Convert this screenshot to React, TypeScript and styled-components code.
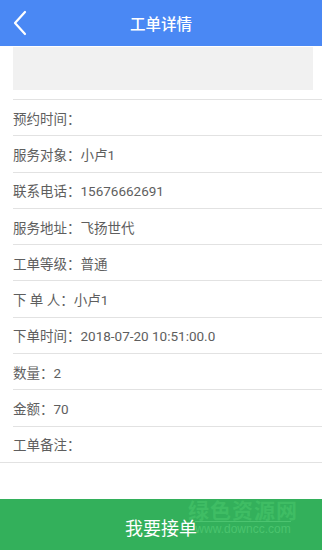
import React from 'react';
import styled, { createGlobalStyle } from 'styled-components';

const GlobalStyle = createGlobalStyle`
  html, body {
    margin: 0;
    padding: 0;
    background: #ffffff;
    font-family: Roboto, "Noto Sans CJK SC", sans-serif;
  }
`;

const Page = styled.div`
  width: 322px;
  height: 550px;
  display: flex;
  flex-direction: column;
  overflow: hidden;
  position: relative;
`;

const Header = styled.header`
  height: 46px;
  background-color: #4a88f4;
  display: flex;
  align-items: center;
  justify-content: center;
  position: relative;
  flex-shrink: 0;
`;

const BackButton = styled.span`
  position: absolute;
  left: 12px;
  top: 10px;
  width: 16px;
  height: 26px;
  display: flex;
`;

const Title = styled.h1`
  margin: 0;
  color: #ffffff;
  font-size: 15.5px;
  font-weight: 500;
  font-family: "Noto Sans CJK SC", sans-serif;
`;

const Body = styled.main`
  flex: 1;
  display: flex;
  flex-direction: column;
`;

const Banner = styled.div`
  height: 43px;
  margin: 1px 9px 0 13px;
  background-color: #f1f1f1;
`;

const List = styled.div`
  margin-top: 9px;
  display: flex;
  flex-direction: column;
  border-top: 1px solid #e2e2e2;
  margin-left: 13px;
`;

const Row = styled.div<{ $full?: boolean }>`
  height: 35.3px;
  display: flex;
  align-items: center;
  border-bottom: 1px solid #e2e2e2;
  margin-left: ${({ $full }) => ($full ? '-13px' : '0')};
  padding-left: ${({ $full }) => ($full ? '13px' : '0')};
  font-size: 13.5px;
  color: #5e5e5e;
  font-family: Roboto, "Noto Sans CJK SC", sans-serif;
`;

const Footer = styled.button`
  height: 51px;
  border: none;
  background-color: #33b05b;
  color: #ffffff;
  font-size: 18px;
  font-family: "Noto Sans CJK SC", sans-serif;
  display: flex;
  align-items: center;
  justify-content: center;
  flex-shrink: 0;
  padding: 0;
  padding-top: 4px;
`;

const Watermark = styled.div`
  position: absolute;
  right: 24px;
  bottom: 14px;
  display: flex;
  flex-direction: column;
  align-items: center;
  pointer-events: none;
  font-family: "Noto Sans CJK SC", sans-serif;
`;

const WatermarkName = styled.span`
  font-size: 21px;
  font-weight: 700;
  letter-spacing: 1px;
  line-height: 24px;
  color: #3fbd64;
`;

const WatermarkUrl = styled.span`
  font-size: 12px;
  line-height: 13px;
  font-family: "Liberation Sans", sans-serif;
  border-top: 1px solid #4cc470;
  padding-top: 1px;
  color: #4ac46e;
`;

const rows = [
  '预约时间：',
  '服务对象：小卢1',
  '联系电话：15676662691',
  '服务地址：飞扬世代',
  '工单等级：普通',
  '下 单 人：小卢1',
  '下单时间：2018-07-20 10:51:00.0',
  '数量：2',
  '金额：70',
  '工单备注：',
];

export default function App() {
  return (
    <>
      <GlobalStyle />
      <Page>
        <Header>
          <BackButton>
            <svg width="16" height="26" viewBox="0 0 16 26">
              <polyline
                points="13,2 3,13 13,24"
                fill="none"
                stroke="#ffffff"
                strokeWidth="2.2"
                strokeLinecap="round"
                strokeLinejoin="round"
              />
            </svg>
          </BackButton>
          <Title>工单详情</Title>
        </Header>
        <Body>
          <Banner />
          <List>
            {rows.map((text, i) => (
              <Row key={i} $full={i === rows.length - 1}>
                {text}
              </Row>
            ))}
          </List>
        </Body>
        <Footer>我要接单</Footer>
        <Watermark>
          <WatermarkName>绿色资源网</WatermarkName>
          <WatermarkUrl>www.downcc.com</WatermarkUrl>
        </Watermark>
      </Page>
    </>
  );
}
